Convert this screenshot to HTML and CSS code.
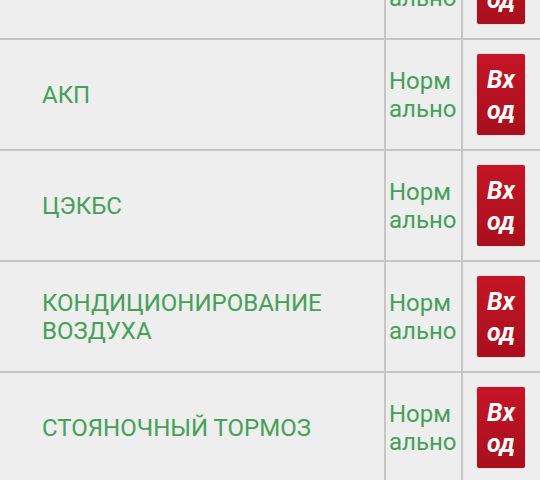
FILE: index.html
```html
<!DOCTYPE html>
<html lang="ru">
<head>
<meta charset="utf-8">
<link rel="stylesheet" href="styles.css">
</head>
<body>
<div class="table">
  <div class="row">
    <div class="name"></div>
    <div class="status">Норм<br>ально</div>
    <div class="action"><span class="btn">Вх<br>од</span></div>
  </div>
  <div class="row">
    <div class="name">АКП</div>
    <div class="status">Норм<br>ально</div>
    <div class="action"><span class="btn">Вх<br>од</span></div>
  </div>
  <div class="row">
    <div class="name">ЦЭКБС</div>
    <div class="status">Норм<br>ально</div>
    <div class="action"><span class="btn">Вх<br>од</span></div>
  </div>
  <div class="row">
    <div class="name">КОНДИЦИОНИРОВАНИЕ<br>ВОЗДУХА</div>
    <div class="status">Норм<br>ально</div>
    <div class="action"><span class="btn">Вх<br>од</span></div>
  </div>
  <div class="row">
    <div class="name">СТОЯНОЧНЫЙ ТОРМОЗ</div>
    <div class="status">Норм<br>ально</div>
    <div class="action"><span class="btn">Вх<br>од</span></div>
  </div>
</div>
</body>
</html>
```
FILE: styles.css
```css
html, body {
  margin: 0;
  padding: 0;
  background: #eeeeee;
  overflow: hidden;
}
body {
  width: 540px;
  height: 480px;
  font-family: Roboto, "Noto Sans", sans-serif;
}
.table {
  margin-top: -71px;
}
.row {
  display: grid;
  grid-template-columns: 384px 77px 79px;
  height: 109px;
  border-bottom: 2px solid #c6c6c6;
}
.name {
  display: flex;
  align-items: center;
  padding-left: 42px;
  color: #45a058;
  font-size: 24px;
  line-height: 28px;
}
.status {
  display: flex;
  align-items: center;
  border-left: 2px solid #c6c6c6;
  padding-left: 3px;
  color: #45a058;
  font-size: 24px;
  line-height: 28px;
}
.action {
  display: flex;
  align-items: center;
  border-left: 2px solid #c6c6c6;
  padding-left: 14px;
}
.btn {
  display: flex;
  align-items: center;
  justify-content: center;
  width: 48px;
  height: 81px;
  border-radius: 2px;
  background: linear-gradient(#c41526, #a90f1d);
  box-shadow: 0 0 1px rgba(120, 0, 0, 0.5);
  color: #ffffff;
  font-weight: bold;
  font-style: italic;
  font-size: 25px;
  line-height: 31px;
  text-align: center;
}
```
